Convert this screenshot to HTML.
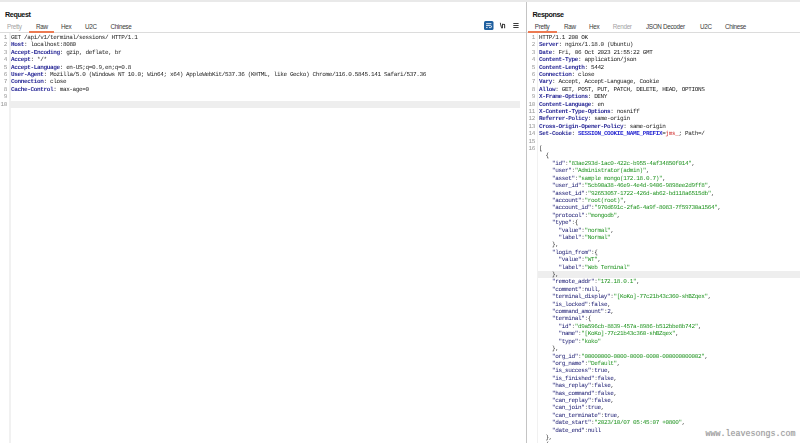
<!DOCTYPE html>
<html lang="en"><head><meta charset="utf-8"><title>Burp Repeater</title>
<style>
html,body{margin:0;padding:0;background:#fff;}
body{width:800px;height:443px;overflow:hidden;position:relative;font-family:"Liberation Sans",sans-serif;}
.topband{position:absolute;left:0;top:0;width:800px;height:1.5px;background:#e9e9e9;}
.title{position:absolute;font-weight:bold;font-size:7.2px;line-height:8px;letter-spacing:-0.4px;color:#111;white-space:pre;}
.tab{position:absolute;will-change:auto;font-size:6.3px;line-height:8px;letter-spacing:-0.3px;color:#3a3a3a;white-space:pre;}
.tab.dis{color:#a3a3a3;}
.ul{position:absolute;height:1.8px;background:#ec7a52;}
.hr{position:absolute;height:1px;background:#dcdcdc;}
.vr{position:absolute;width:1px;background:#c4c4c4;}
.gl{position:absolute;width:1.3px;background:#f1f1f1;}
.ln,.no{position:absolute;will-change:transform;text-rendering:geometricPrecision;font-family:"Liberation Mono",monospace;font-size:6.0px;line-height:7.41px;height:7.41px;letter-spacing:-0.358px;white-space:pre;color:#1e1e1e;}
.no{width:14px;text-align:right;color:#969696;}
.hl{position:absolute;height:7px;background:#eeeeee;}
.h{color:#2c2c98;font-weight:bold;}
.c{color:#2a2ad2;font-weight:bold;}
.r{color:#d03030;}
.k{color:#16166e;}
.p{color:#555;}
.s{color:#219421;}
.wm{position:absolute;font-family:"Liberation Mono",monospace;font-size:8.35px;line-height:10px;color:#9a9a9a;white-space:pre;text-shadow:0 0 1px #ccc;}
</style></head>
<body>
<div class="topband"></div>
<div class="title" style="left:5px;top:11px">Request</div>
<div class="tab dis" style="left:7.00px;top:22.80px">Pretty</div>
<div class="tab " style="left:36.00px;top:22.80px">Raw</div>
<div class="tab " style="left:61.00px;top:22.80px">Hex</div>
<div class="tab " style="left:85.00px;top:22.80px">U2C</div>
<div class="tab " style="left:110.40px;top:22.80px">Chinese</div>
<div class="hr" style="left:0;top:32px;width:526px"></div>
<div class="ul" style="left:29px;top:30.9px;width:25px"></div>
<div class="gl" style="left:9.3px;top:33px;height:410px"></div>
<div class="no" style="top:33.90px;left:-6.60px">1</div>
<div class="no" style="top:41.31px;left:-6.60px">2</div>
<div class="no" style="top:48.72px;left:-6.60px">3</div>
<div class="no" style="top:56.12px;left:-6.60px">4</div>
<div class="no" style="top:63.54px;left:-6.60px">5</div>
<div class="no" style="top:70.95px;left:-6.60px">6</div>
<div class="no" style="top:78.36px;left:-6.60px">7</div>
<div class="no" style="top:85.77px;left:-6.60px">8</div>
<div class="no" style="top:93.17px;left:-6.60px">9</div>
<div class="no" style="top:100.58px;left:-6.60px">10</div>
<div class="ln" style="top:33.90px;left:11.00px">GET /api/v1/terminal/sessions/ HTTP/1.1</div>
<div class="ln" style="top:41.31px;left:11.00px"><span class="h">Host</span>: localhost:8080</div>
<div class="ln" style="top:48.72px;left:11.00px"><span class="h">Accept-Encoding</span>: gzip, deflate, br</div>
<div class="ln" style="top:56.12px;left:11.00px"><span class="h">Accept</span>: */*</div>
<div class="ln" style="top:63.54px;left:11.00px"><span class="h">Accept-Language</span>: en-US;q=0.9,en;q=0.8</div>
<div class="ln" style="top:70.95px;left:11.00px"><span class="h">User-Agent</span>: Mozilla/5.0 (Windows NT 10.0; Win64; x64) AppleWebKit/537.36 (KHTML, like Gecko) Chrome/116.0.5845.141 Safari/537.36</div>
<div class="ln" style="top:78.36px;left:11.00px"><span class="h">Connection</span>: close</div>
<div class="ln" style="top:85.77px;left:11.00px"><span class="h">Cache-Control</span>: max-age=0</div>
<div class="hl" style="top:101px;left:10.00px;width:510.30px"></div>
<svg style="position:absolute;left:483.6px;top:20.9px" width="10" height="10" viewBox="0 0 10 10"><rect x="0" y="0" width="9.5" height="9.1" rx="1.5" fill="#1f5f9f"/><path d="M2.1 2.7H7.4M2.1 4.6H6.5a1 1 0 0 1 0 2H5.1M2.1 6.6H3.6" stroke="#fff" stroke-width="0.9" fill="none"/></svg>
<div class="tab" style="left:499.7px;top:21.5px;font-size:6.6px;letter-spacing:0;color:#1a1a1a;will-change:transform;-webkit-text-stroke:0.3px #1a1a1a">\n</div>
<svg style="position:absolute;left:513px;top:22px" width="7" height="7" viewBox="0 0 7 7"><path d="M0.3 1.5H5.6M0.3 3.5H5.6M0.3 5.5H5.6" stroke="#3a3a3a" stroke-width="1"/></svg>
<div class="vr" style="left:526px;top:1.5px;height:442px"></div>
<div class="title" style="left:532.5px;top:11px">Response</div>
<div class="tab " style="left:534.80px;top:22.80px">Pretty</div>
<div class="tab " style="left:564.10px;top:22.80px">Raw</div>
<div class="tab " style="left:589.00px;top:22.80px">Hex</div>
<div class="tab dis" style="left:612.80px;top:22.80px">Render</div>
<div class="tab " style="left:646.00px;top:22.80px">JSON Decoder</div>
<div class="tab " style="left:700.00px;top:22.80px">U2C</div>
<div class="tab " style="left:725.00px;top:22.80px">Chinese</div>
<div class="hr" style="left:527px;top:32px;width:273px"></div>
<div class="ul" style="left:527.8px;top:30.9px;width:28.9px"></div>
<div class="gl" style="left:537.1px;top:33px;height:410px"></div>
<div class="no" style="top:33.90px;left:521.20px">1</div>
<div class="no" style="top:41.31px;left:521.20px">2</div>
<div class="no" style="top:48.72px;left:521.20px">3</div>
<div class="no" style="top:56.12px;left:521.20px">4</div>
<div class="no" style="top:63.54px;left:521.20px">5</div>
<div class="no" style="top:70.95px;left:521.20px">6</div>
<div class="no" style="top:78.36px;left:521.20px">7</div>
<div class="no" style="top:85.77px;left:521.20px">8</div>
<div class="no" style="top:93.17px;left:521.20px">9</div>
<div class="no" style="top:100.58px;left:521.20px">10</div>
<div class="no" style="top:107.99px;left:521.20px">11</div>
<div class="no" style="top:115.41px;left:521.20px">12</div>
<div class="no" style="top:122.82px;left:521.20px">13</div>
<div class="no" style="top:130.22px;left:521.20px">14</div>
<div class="no" style="top:137.63px;left:521.20px">15</div>
<div class="no" style="top:145.04px;left:521.20px">16</div>
<div class="ln" style="top:33.90px;left:538.90px">HTTP/1.1 200 OK</div>
<div class="ln" style="top:41.31px;left:538.90px"><span class="h">Server</span>: nginx/1.18.0 (Ubuntu)</div>
<div class="ln" style="top:48.72px;left:538.90px"><span class="h">Date</span>: Fri, 06 Oct 2023 21:55:22 GMT</div>
<div class="ln" style="top:56.12px;left:538.90px"><span class="h">Content-Type</span>: application/json</div>
<div class="ln" style="top:63.54px;left:538.90px"><span class="h">Content-Length</span>: 5442</div>
<div class="ln" style="top:70.95px;left:538.90px"><span class="h">Connection</span>: close</div>
<div class="ln" style="top:78.36px;left:538.90px"><span class="h">Vary</span>: Accept, Accept-Language, Cookie</div>
<div class="ln" style="top:85.77px;left:538.90px"><span class="h">Allow</span>: GET, POST, PUT, PATCH, DELETE, HEAD, OPTIONS</div>
<div class="ln" style="top:93.17px;left:538.90px"><span class="h">X-Frame-Options</span>: DENY</div>
<div class="ln" style="top:100.58px;left:538.90px"><span class="h">Content-Language</span>: en</div>
<div class="ln" style="top:107.99px;left:538.90px"><span class="h">X-Content-Type-Options</span>: nosniff</div>
<div class="ln" style="top:115.41px;left:538.90px"><span class="h">Referrer-Policy</span>: same-origin</div>
<div class="ln" style="top:122.82px;left:538.90px"><span class="h">Cross-Origin-Opener-Policy</span>: same-origin</div>
<div class="ln" style="top:130.22px;left:538.90px"><span class="h">Set-Cookie</span>: <span class="c">SESSION_COOKIE_NAME_PREFIX</span>=<span class="r">jms_</span>; Path=/</div>
<div class="ln" style="top:145.04px;left:538.90px">[</div>
<div class="ln" style="top:152.45px;left:538.90px">  {</div>
<div class="ln" style="top:159.86px;left:538.90px">    <span class="k">"id"</span><span class="p">:</span><span class="s">"83ae293d-1ac0-422c-b955-4af34850f014"</span>,</div>
<div class="ln" style="top:167.27px;left:538.90px">    <span class="k">"user"</span><span class="p">:</span><span class="s">"Administrator(admin)"</span>,</div>
<div class="ln" style="top:174.68px;left:538.90px">    <span class="k">"asset"</span><span class="p">:</span><span class="s">"sample mongo(172.18.0.7)"</span>,</div>
<div class="ln" style="top:182.09px;left:538.90px">    <span class="k">"user_id"</span><span class="p">:</span><span class="s">"5cb90a38-46e9-4e4d-9406-9898ee2d9ff8"</span>,</div>
<div class="ln" style="top:189.50px;left:538.90px">    <span class="k">"asset_id"</span><span class="p">:</span><span class="s">"92653057-1722-426d-ab62-bd118a6515db"</span>,</div>
<div class="ln" style="top:196.91px;left:538.90px">    <span class="k">"account"</span><span class="p">:</span><span class="s">"root(root)"</span>,</div>
<div class="ln" style="top:204.32px;left:538.90px">    <span class="k">"account_id"</span><span class="p">:</span><span class="s">"970d691c-2fa6-4a9f-8083-7f59730a1564"</span>,</div>
<div class="ln" style="top:211.73px;left:538.90px">    <span class="k">"protocol"</span><span class="p">:</span><span class="s">"mongodb"</span>,</div>
<div class="ln" style="top:219.14px;left:538.90px">    <span class="k">"type"</span><span class="p">:</span>{</div>
<div class="ln" style="top:226.55px;left:538.90px">      <span class="k">"value"</span><span class="p">:</span><span class="s">"normal"</span>,</div>
<div class="ln" style="top:233.96px;left:538.90px">      <span class="k">"label"</span><span class="p">:</span><span class="s">"Normal"</span></div>
<div class="ln" style="top:241.38px;left:538.90px">    },</div>
<div class="ln" style="top:248.78px;left:538.90px">    <span class="k">"login_from"</span><span class="p">:</span>{</div>
<div class="ln" style="top:256.20px;left:538.90px">      <span class="k">"value"</span><span class="p">:</span><span class="s">"WT"</span>,</div>
<div class="ln" style="top:263.61px;left:538.90px">      <span class="k">"label"</span><span class="p">:</span><span class="s">"Web Terminal"</span></div>
<div class="hl" style="top:271px;left:537.90px;width:262.10px"></div>
<div class="ln" style="top:271.02px;left:538.90px">    },</div>
<div class="ln" style="top:278.43px;left:538.90px">    <span class="k">"remote_addr"</span><span class="p">:</span><span class="s">"172.18.0.1"</span>,</div>
<div class="ln" style="top:285.84px;left:538.90px">    <span class="k">"comment"</span><span class="p">:</span><span class="k">null</span>,</div>
<div class="ln" style="top:293.25px;left:538.90px">    <span class="k">"terminal_display"</span><span class="p">:</span><span class="s">"[KoKo]-77c21b43c360-shBZqex"</span>,</div>
<div class="ln" style="top:300.66px;left:538.90px">    <span class="k">"is_locked"</span><span class="p">:</span><span class="k">false</span>,</div>
<div class="ln" style="top:308.07px;left:538.90px">    <span class="k">"command_amount"</span><span class="p">:</span><span class="k">2</span>,</div>
<div class="ln" style="top:315.48px;left:538.90px">    <span class="k">"terminal"</span><span class="p">:</span>{</div>
<div class="ln" style="top:322.89px;left:538.90px">      <span class="k">"id"</span><span class="p">:</span><span class="s">"d9a596cb-8839-457a-8986-b512bbe8b742"</span>,</div>
<div class="ln" style="top:330.30px;left:538.90px">      <span class="k">"name"</span><span class="p">:</span><span class="s">"[KoKo]-77c21b43c360-shBZqex"</span>,</div>
<div class="ln" style="top:337.71px;left:538.90px">      <span class="k">"type"</span><span class="p">:</span><span class="s">"koko"</span></div>
<div class="ln" style="top:345.12px;left:538.90px">    },</div>
<div class="ln" style="top:352.53px;left:538.90px">    <span class="k">"org_id"</span><span class="p">:</span><span class="s">"00000000-0000-0000-0000-000000000002"</span>,</div>
<div class="ln" style="top:359.94px;left:538.90px">    <span class="k">"org_name"</span><span class="p">:</span><span class="s">"Default"</span>,</div>
<div class="ln" style="top:367.35px;left:538.90px">    <span class="k">"is_success"</span><span class="p">:</span><span class="k">true</span>,</div>
<div class="ln" style="top:374.76px;left:538.90px">    <span class="k">"is_finished"</span><span class="p">:</span><span class="k">false</span>,</div>
<div class="ln" style="top:382.17px;left:538.90px">    <span class="k">"has_replay"</span><span class="p">:</span><span class="k">false</span>,</div>
<div class="ln" style="top:389.58px;left:538.90px">    <span class="k">"has_command"</span><span class="p">:</span><span class="k">false</span>,</div>
<div class="ln" style="top:396.99px;left:538.90px">    <span class="k">"can_replay"</span><span class="p">:</span><span class="k">false</span>,</div>
<div class="ln" style="top:404.40px;left:538.90px">    <span class="k">"can_join"</span><span class="p">:</span><span class="k">true</span>,</div>
<div class="ln" style="top:411.81px;left:538.90px">    <span class="k">"can_terminate"</span><span class="p">:</span><span class="k">true</span>,</div>
<div class="ln" style="top:419.22px;left:538.90px">    <span class="k">"date_start"</span><span class="p">:</span><span class="s">"2023/10/07 05:45:07 +0800"</span>,</div>
<div class="ln" style="top:426.63px;left:538.90px">    <span class="k">"date_end"</span><span class="p">:</span><span class="k">null</span></div>
<div class="ln" style="top:434.04px;left:538.90px">  },</div>
<div class="ln" style="top:441.45px;left:538.90px">  {</div>
<div class="wm" style="left:705.5px;top:429.1px">www.leavesongs.com</div>
</body></html>
